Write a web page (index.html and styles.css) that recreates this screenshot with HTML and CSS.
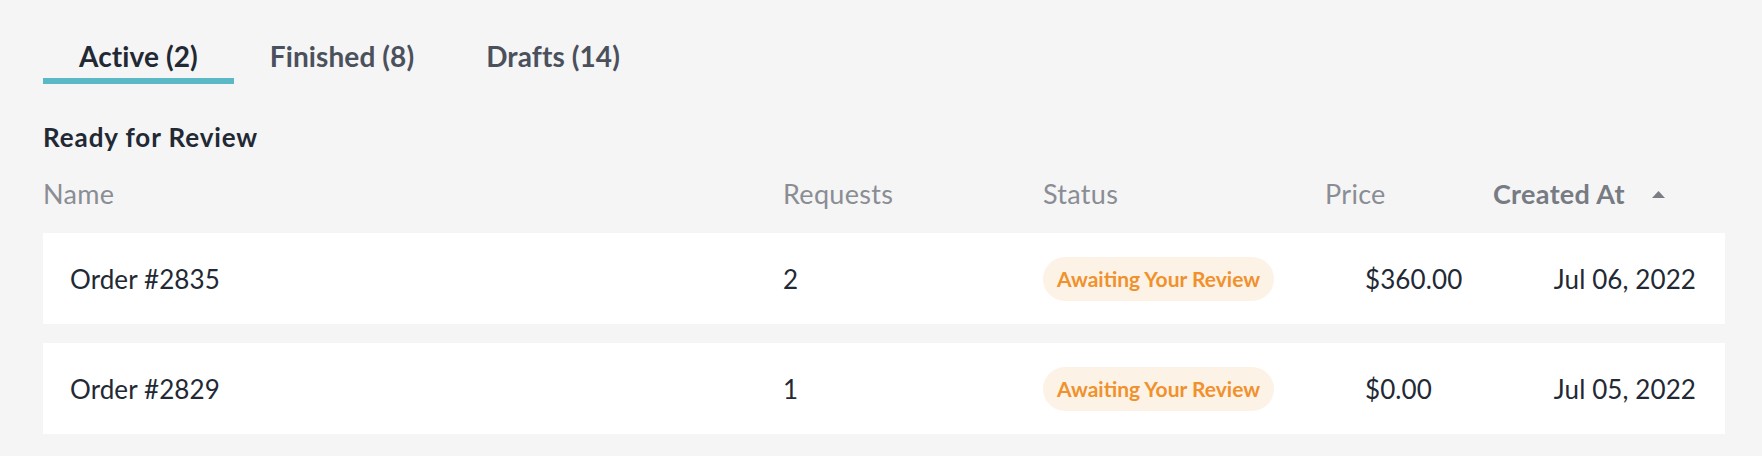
FILE: index.html
```html
<!DOCTYPE html>
<html lang="en">
<head>
<meta charset="utf-8">
<title>Orders</title>
<link rel="stylesheet" href="styles.css">
</head>
<body>
<div class="page">
  <nav class="tabs">
    <div class="tab active">Active (2)</div>
    <div class="tab">Finished (8)</div>
    <div class="tab">Drafts (14)</div>
  </nav>
  <h2 class="section-title">Ready for Review</h2>
  <div class="table">
    <div class="thead">
      <div class="th">Name</div>
      <div class="th">Requests</div>
      <div class="th">Status</div>
      <div class="th">Price</div>
      <div class="th sorted">Created At
        <svg class="sort-icon" width="13" height="7" viewBox="0 0 13 7"><path d="M6.5 0 L13 7 L0 7 Z" fill="#7a7d84"/></svg>
      </div>
    </div>
    <div class="row">
      <div class="cell name">Order #2835</div>
      <div class="cell">2</div>
      <div class="cell"><span class="badge">Awaiting Your Review</span></div>
      <div class="cell price">$360.00</div>
      <div class="cell date">Jul 06, 2022</div>
    </div>
    <div class="row">
      <div class="cell name">Order #2829</div>
      <div class="cell">1</div>
      <div class="cell"><span class="badge">Awaiting Your Review</span></div>
      <div class="cell price">$0.00</div>
      <div class="cell date">Jul 05, 2022</div>
    </div>
  </div>
</div>
</body>
</html>
```

FILE: styles.css
```css
* { box-sizing: border-box; }
html, body {
  margin: 0;
  padding: 0;
  background: #f5f5f5;
}
body {
  font-family: Lato, "Noto Sans", sans-serif;
  color: #222934;
}
.page {
  padding: 40px 37px 0 43px;
}
.tabs {
  display: flex;
}
.tab {
  font-size: 28px;
  font-weight: 700;
  letter-spacing: 0.1px;
  line-height: 32px;
  padding: 0 36px 6px;
  border-bottom: 6px solid transparent;
  color: #4b515c;
}
.tab.active {
  color: #222934;
  border-bottom-color: #5bb9c5;
}
.section-title {
  margin: 38px 0 0;
  font-size: 26px;
  font-weight: 700;
  letter-spacing: 0.9px;
  line-height: 30px;
  color: #222934;
}
.thead, .row {
  display: grid;
  grid-template-columns: 740px 260px 282px 168px 1fr;
  align-items: center;
}
.thead {
  margin-top: 27px;
  height: 30px;
  margin-bottom: 24px;
}
.th {
  font-size: 27px;
  letter-spacing: 0.3px;
  line-height: 30px;
  color: #8a8d94;
}
.th.sorted {
  font-weight: 700;
  color: #777b83;
  display: flex;
  align-items: center;
}
.sort-icon {
  margin-left: 27px;
}
.row {
  background: #ffffff;
  height: 91px;
  margin-bottom: 19px;
  font-size: 26px;
  letter-spacing: 0.1px;
}
.cell.name {
  padding-left: 27px;
}
.cell.price {
  padding-left: 40px;
}
.cell.date {
  text-align: right;
  padding-right: 29px;
}
.badge {
  display: inline-flex;
  align-items: center;
  height: 44px;
  padding: 0 14px;
  border-radius: 22px;
  background: #fdf2e6;
  color: #f0912c;
  font-size: 21px;
  font-weight: 700;
  letter-spacing: 0;
}
```
